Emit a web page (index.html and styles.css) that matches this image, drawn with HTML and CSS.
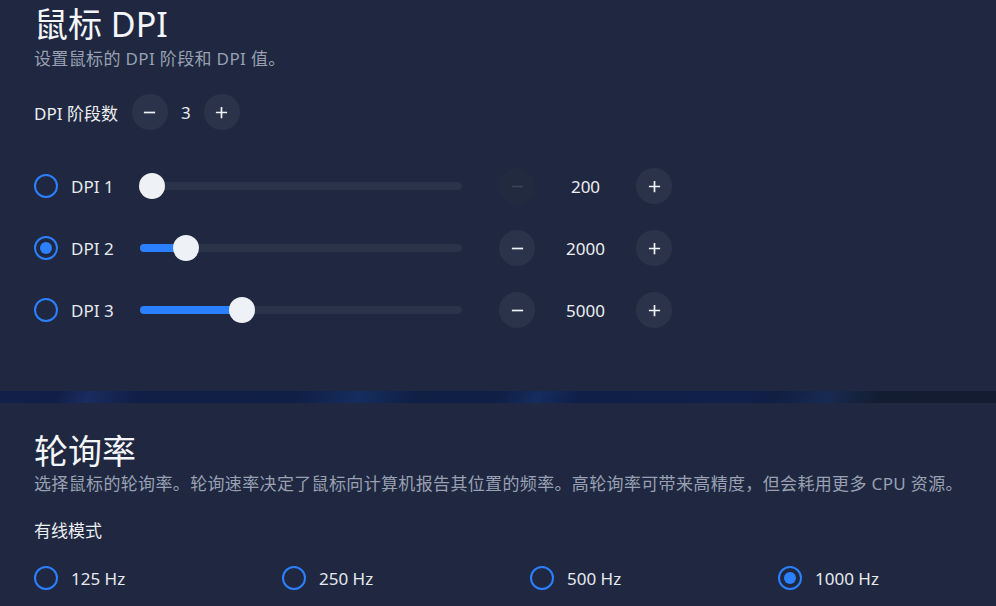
FILE: index.html
```
<!DOCTYPE html>
<html lang="zh-CN">
<head>
<meta charset="utf-8">
<title>鼠标设置</title>
<link rel="stylesheet" href="styles.css">
</head>
<body>
<section class="card card-dpi">
  <h1 class="title">鼠标 DPI</h1>
  <p class="desc">设置鼠标的 DPI 阶段和 DPI 值。</p>
  <div class="stage-row">
    <span class="stage-label">DPI 阶段数</span>
    <button class="round-btn" aria-label="减少"><svg viewBox="0 0 16 16"><path d="M2 8h12"/></svg></button>
    <span class="stage-value">3</span>
    <button class="round-btn" aria-label="增加"><svg viewBox="0 0 16 16"><path d="M2 8h12M8 2v12"/></svg></button>
  </div>
  <div class="dpi-list">
    <div class="dpi-row">
      <span class="radio"></span>
      <span class="dpi-label">DPI 1</span>
      <div class="slider"><div class="fill" style="width:12px"></div><span class="thumb"></span></div>
      <button class="round-btn disabled" aria-label="减少"><svg viewBox="0 0 16 16"><path d="M2 8h12"/></svg></button>
      <span class="dpi-value">200</span>
      <button class="round-btn" aria-label="增加"><svg viewBox="0 0 16 16"><path d="M2 8h12M8 2v12"/></svg></button>
    </div>
    <div class="dpi-row">
      <span class="radio checked"></span>
      <span class="dpi-label">DPI 2</span>
      <div class="slider"><div class="fill" style="width:46px"></div><span class="thumb"></span></div>
      <button class="round-btn" aria-label="减少"><svg viewBox="0 0 16 16"><path d="M2 8h12"/></svg></button>
      <span class="dpi-value">2000</span>
      <button class="round-btn" aria-label="增加"><svg viewBox="0 0 16 16"><path d="M2 8h12M8 2v12"/></svg></button>
    </div>
    <div class="dpi-row">
      <span class="radio"></span>
      <span class="dpi-label">DPI 3</span>
      <div class="slider"><div class="fill" style="width:102px"></div><span class="thumb"></span></div>
      <button class="round-btn" aria-label="减少"><svg viewBox="0 0 16 16"><path d="M2 8h12"/></svg></button>
      <span class="dpi-value">5000</span>
      <button class="round-btn" aria-label="增加"><svg viewBox="0 0 16 16"><path d="M2 8h12M8 2v12"/></svg></button>
    </div>
  </div>
</section>
<div class="strip"></div>
<section class="card card-rate">
  <h1 class="title">轮询率</h1>
  <p class="desc">选择鼠标的轮询率。轮询速率决定了鼠标向计算机报告其位置的频率。高轮询率可带来高精度，但会耗用更多 CPU 资源。</p>
  <h2 class="mode">有线模式</h2>
  <div class="rate-grid">
    <label class="rate"><span class="radio"></span><span>125 Hz</span></label>
    <label class="rate"><span class="radio"></span><span>250 Hz</span></label>
    <label class="rate"><span class="radio"></span><span>500 Hz</span></label>
    <label class="rate"><span class="radio checked"></span><span>1000 Hz</span></label>
  </div>
</section>
</body>
</html>
```
FILE: styles.css
```
* { box-sizing: border-box; }
html, body { margin: 0; padding: 0; }
body {
  width: 996px;
  height: 606px;
  overflow: hidden;
  background: #1f2840;
  font-family: "Noto Sans", "Noto Sans CJK SC", sans-serif;
  color: #e8ebf0;
}
.card {
  background: #1f2840;
  padding: 0 34px;
}
.card-dpi {
  height: 391px;
  padding-top: 4px;
}
.card-rate {
  padding-top: 28px;
  height: 215px;
}
.strip {
  height: 12px;
  background:
    linear-gradient(115deg, transparent 0 6%, rgba(50,80,170,0.25) 9%, transparent 14% 30%, rgba(45,95,190,0.22) 36%, transparent 42% 50%, rgba(45,95,190,0.2) 54%, transparent 58% 78%, rgba(45,95,190,0.2) 83%, transparent 88%),
    linear-gradient(90deg, #121f48 0%, #0f1f44 40%, #10204a 75%, #131d33 85%, #131c30 100%);
}
.title {
  margin: 0;
  font-size: 34px;
  line-height: 40px;
  font-weight: 400;
  color: #f3f5f8;
}
.desc {
  margin: 5px 0 0;
  font-size: 17px;
  line-height: 20px;
  letter-spacing: 0.35px;
  white-space: nowrap;
  color: #98a0b2;
}
.card-rate .desc { margin-top: 3px; }
.stage-row {
  margin-top: 25px;
  display: flex;
  align-items: center;
  height: 36px;
  font-size: 17px;
}
.stage-label { margin-right: 14px; color: #eceef2; }
.stage-value { width: 36px; text-align: center; }
.round-btn {
  width: 36px;
  height: 36px;
  border-radius: 50%;
  border: 0;
  padding: 0;
  background: #2a3349;
  display: flex;
  align-items: center;
  justify-content: center;
  flex: none;
}
.round-btn svg {
  width: 15px;
  height: 15px;
  fill: none;
  stroke: #f0f2f5;
  stroke-width: 1.8;
}
.round-btn.disabled { background: #222a40; }
.round-btn.disabled svg { stroke: #3a4358; }
.dpi-list {
  margin-top: 38px;
  display: flex;
  flex-direction: column;
  gap: 26px;
}
.dpi-row {
  display: flex;
  align-items: center;
  height: 36px;
  font-size: 17px;
}
.radio {
  width: 24px;
  height: 24px;
  border-radius: 50%;
  border: 2px solid #2a80ff;
  flex: none;
  display: flex;
  align-items: center;
  justify-content: center;
}
.radio.checked::after {
  content: "";
  width: 12px;
  height: 12px;
  border-radius: 50%;
  background: #2a80ff;
}
.dpi-label {
  margin-left: 13px;
  width: 69px;
  color: #e6e9ee;
}
.slider {
  position: relative;
  width: 322px;
  height: 8px;
  border-radius: 4px;
  background: #2a3349;
  display: flex;
  align-items: center;
  margin-right: 37px;
}
.fill {
  height: 8px;
  border-radius: 4px;
  background: #2a80ff;
}
.thumb {
  width: 26px;
  height: 26px;
  border-radius: 50%;
  background: #eef1f6;
  margin-left: -13px;
  flex: none;
}
.dpi-value {
  width: 101px;
  text-align: center;
  color: #eceef2;
}
.mode {
  margin: 27px 0 0;
  font-size: 17px;
  line-height: 20px;
  font-weight: 400;
  color: #eceef2;
}
.rate-grid {
  margin-top: 25px;
  display: grid;
  grid-template-columns: repeat(4, 248px);
}
.rate {
  display: flex;
  align-items: center;
  gap: 13px;
  font-size: 17px;
  height: 24px;
  color: #e6e9ee;
}
```
